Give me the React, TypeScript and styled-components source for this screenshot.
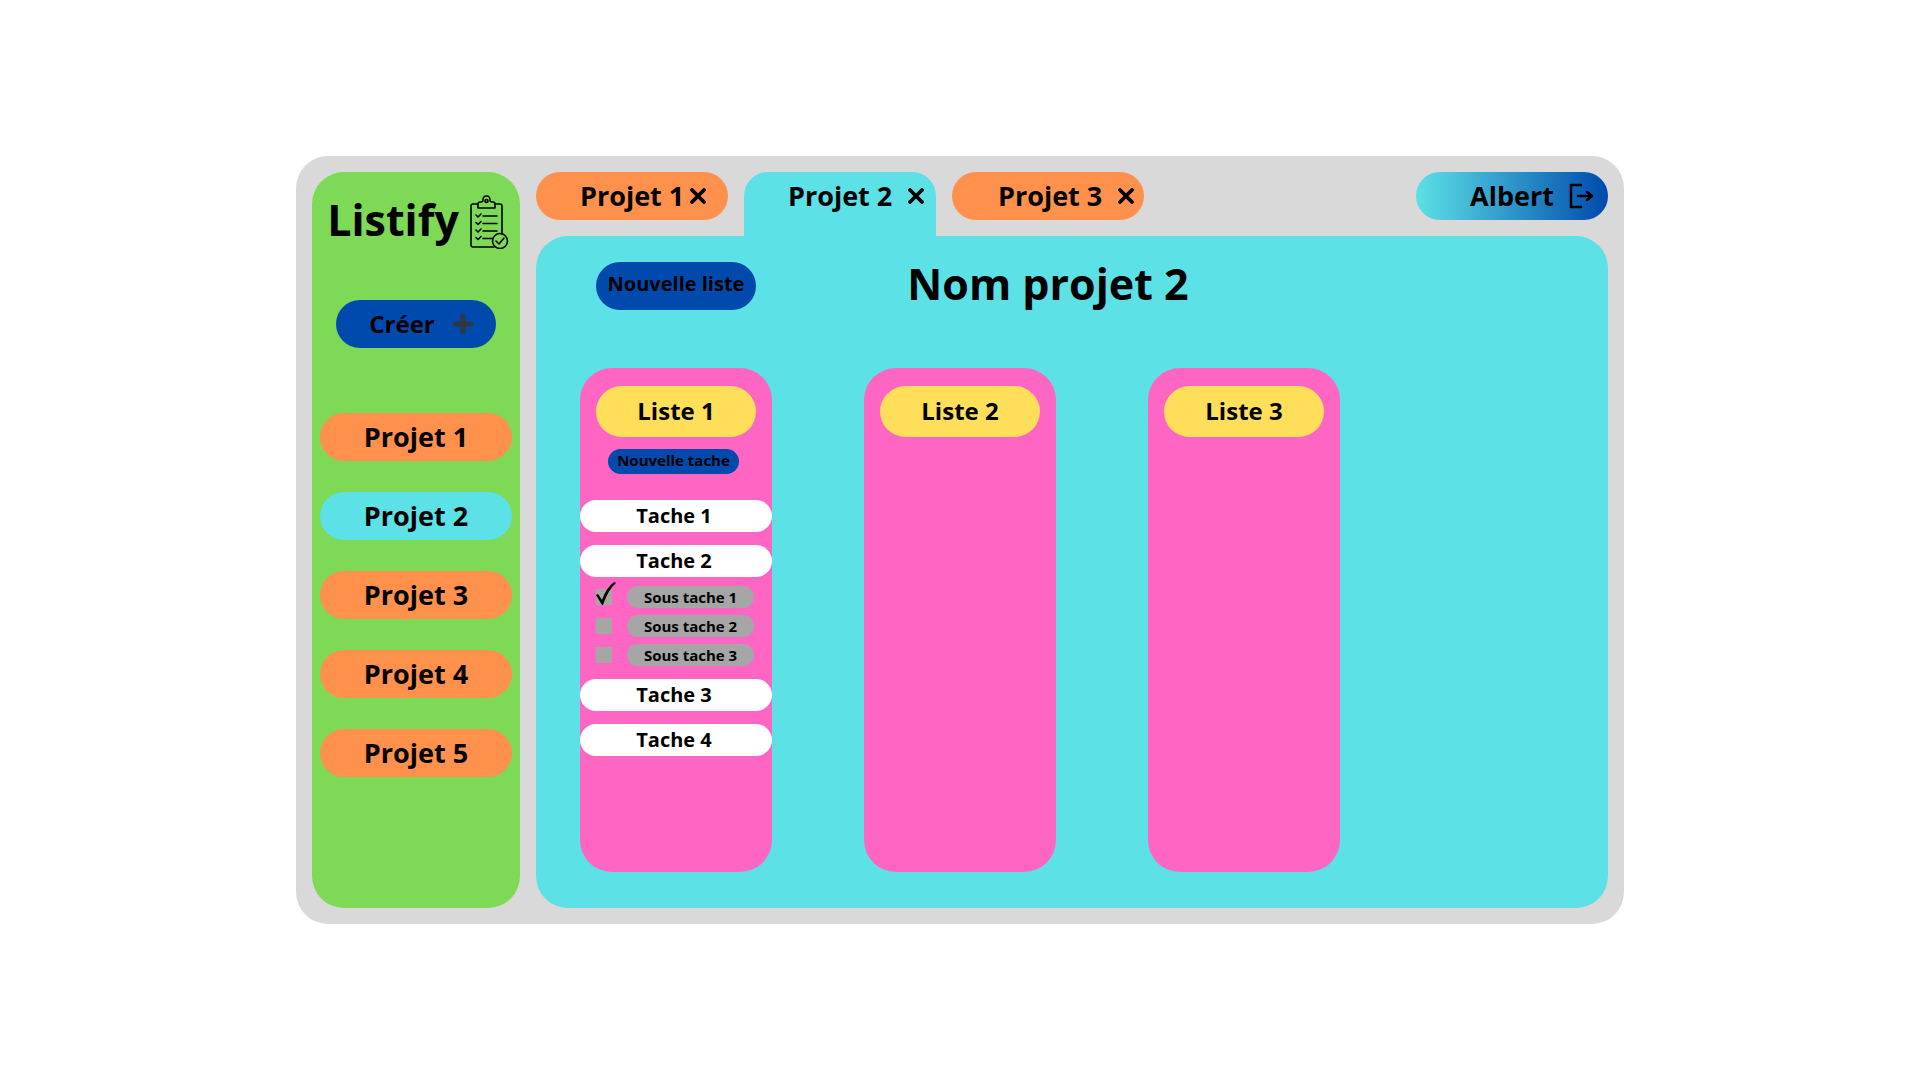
import React, { useState } from "react";
import styled, { createGlobalStyle } from "styled-components";

const color = {
  frame: "#d9d9d9",
  green: "#7ed957",
  orange: "#ff914d",
  cyan: "#5ce1e6",
  blue: "#004aad",
  pink: "#ff66c4",
  yellow: "#ffde59",
  grey: "#a6a6a6",
};

const GlobalStyle = createGlobalStyle`
  *, *::before, *::after { box-sizing: border-box; }
  body {
    margin: 0;
    background: #fff;
    color: #000;
    font-family: "Open Sans", "Noto Sans", sans-serif;
    font-weight: 700;
  }
  button { font: inherit; color: inherit; border: 0; padding: 0; background: none; cursor: pointer; }
  h1, h2, h3, ul { margin: 0; padding: 0; font-weight: inherit; list-style: none; }
  svg { display: block; }
`;

const Page = styled.div`
  display: flex;
  min-height: 100vh;
  padding: 156px 296px;
`;

const Frame = styled.div`
  flex: 1;
  display: flex;
  gap: 16px;
  padding: 16px;
  border-radius: 32px;
  background: ${color.frame};
`;

const Sidebar = styled.aside`
  flex: none;
  width: 208px;
  padding: 20px 8px 32px;
  border-radius: 32px;
  background: ${color.green};
  display: flex;
  flex-direction: column;
  align-items: center;
`;

const Brand = styled.div`
  display: flex;
  align-items: center;
  gap: 10px;
  height: 60px;
  padding-left: 4px;
  font-size: 43px;
  line-height: 56px;
`;

const BrandName = styled.span`
  padding-bottom: 4px;
`;

const PillButton = styled.button`
  display: flex;
  align-items: center;
  justify-content: center;
  width: 160px;
  height: 48px;
  border-radius: 24px;
  background: ${color.blue};
  line-height: 32px;
  white-space: nowrap;
`;

const CreateButton = styled(PillButton)`
  gap: 18px;
  padding-left: 10px;
  font-size: 24px;
`;

const NewListButton = styled(PillButton)`
  padding-bottom: 4px;
  font-size: 20px;
`;

const CreateArea = styled.div`
  padding: 48px 0 65px;
`;

const ProjectList = styled.ul`
  align-self: stretch;
  display: flex;
  flex-direction: column;
  gap: 31px;
`;

const ProjectButton = styled.button<{ $active: boolean }>`
  width: 100%;
  height: 48px;
  border-radius: 24px;
  background: ${(p) => (p.$active ? color.cyan : color.orange)};
  font-size: 27px;
  line-height: 36px;
`;

const Main = styled.main`
  flex: 1;
  min-width: 0;
  display: flex;
  flex-direction: column;
`;

const TopBar = styled.div`
  display: flex;
  gap: 16px;
  height: 64px;
`;

const Tab = styled.div<{ $active?: boolean; $inset: number; $gap: number }>`
  display: flex;
  align-items: center;
  gap: ${(p) => p.$gap}px;
  width: 192px;
  height: ${(p) => (p.$active ? 64 : 48)}px;
  padding: 0 0 ${(p) => (p.$active ? 16 : 0)}px ${(p) => p.$inset}px;
  border-radius: ${(p) => (p.$active ? "24px 24px 0 0" : "24px")};
  background: ${(p) => (p.$active ? color.cyan : color.orange)};
  font-size: 27px;
  line-height: 36px;
  white-space: nowrap;
`;

const Account = styled.button`
  display: flex;
  align-items: center;
  justify-content: flex-end;
  gap: 14px;
  width: 192px;
  height: 48px;
  margin-left: auto;
  padding-right: 14px;
  border-radius: 24px;
  background: linear-gradient(90deg, ${color.cyan}, ${color.blue});
  font-size: 27px;
  line-height: 36px;
`;

const Panel = styled.section`
  flex: 1;
  display: flex;
  flex-direction: column;
  gap: 58px;
  padding: 26px 44px 36px;
  border-radius: 32px;
  background: ${color.cyan};
`;

const PanelHead = styled.header`
  display: grid;
  grid-template-columns: 1fr auto 1fr;
  align-items: center;
  height: 48px;
  padding: 0 64px 0 16px;
`;

const ProjectTitle = styled.h1`
  padding-bottom: 4px;
  font-size: 43px;
  line-height: 44px;
`;

const Board = styled.div`
  flex: 1;
  display: flex;
  gap: 92px;
`;

const Column = styled.section`
  width: 192px;
  padding: 18px 0 24px;
  border-radius: 32px;
  background: ${color.pink};
`;

const ColumnTitle = styled.h2`
  height: 51px;
  margin: 0 16px;
  border-radius: 26px;
  background: ${color.yellow};
  font-size: 24px;
  line-height: 50px;
  text-align: center;
`;

const NewTask = styled.button`
  display: block;
  width: 131px;
  height: 25px;
  margin: 12px 0 26px 28px;
  padding-bottom: 3px;
  border-radius: 13px;
  background: ${color.blue};
  font-size: 15px;
  line-height: 22px;
  white-space: nowrap;
`;

const TaskList = styled.ul`
  display: flex;
  flex-direction: column;
  gap: 13px;
`;

const TaskTitle = styled.h3`
  height: 32px;
  padding-right: 4px;
  border-radius: 16px;
  background: #fff;
  font-size: 20px;
  line-height: 32px;
  text-align: center;
`;

const SubList = styled.ul`
  display: flex;
  flex-direction: column;
  gap: 7px;
  padding-top: 9px;
`;

const SubRow = styled.li`
  display: flex;
  align-items: center;
  gap: 15px;
  padding-left: 16px;
`;

const CheckWrap = styled.span`
  position: relative;
  flex: none;
  width: 16px;
  height: 16px;
`;

const Check = styled.input`
  appearance: none;
  display: block;
  width: 16px;
  height: 16px;
  margin: 0;
  background: ${color.grey};
`;

const Mark = styled.svg`
  position: absolute;
  left: 0;
  bottom: 0;
  pointer-events: none;
`;

const SubLabel = styled.label`
  width: 127px;
  height: 22px;
  border-radius: 11px;
  background: ${color.grey};
  font-size: 15px;
  line-height: 22px;
  text-align: center;
`;

const ClipboardIcon = () => (
  <svg width="40" height="54" viewBox="0 0 40 54" fill="none" stroke="#000" strokeWidth="1.6" strokeLinecap="round" strokeLinejoin="round" aria-hidden="true">
    <path d="M9 9H4Q2 9 2 11V50Q2 52 4 52H25M26 9H31Q33 9 33 11V39" />
    <path d="M9 13V9Q9 7 11 7H12Q14 7 14 5Q14 1 17.500 1T21 5Q21 7 23 7H24Q26 7 26 9V13Z" />
    <circle cx="17.500" cy="6" r="1.500" />
    <path d="M7 20l2 2 3-3M14 21H28M7 27.500l2 2 3-3M14 28.500H28M7 35l2 2 3-3M14 36H28M7 42.500l2 2 3-3M14 43.500H23" />
    <circle cx="31" cy="46" r="7.500" />
    <path d="M27 46l3 3 5-6" />
  </svg>
);

const PlusIcon = () => (
  <svg width="20" height="20" viewBox="0 0 20 20" stroke="#31373d" strokeWidth="5" strokeLinecap="round" aria-hidden="true">
    <path d="M10 2.500V17.500M2.500 10H17.500" />
  </svg>
);

const CloseIcon = () => (
  <svg width="16" height="16" viewBox="0 0 16 16" stroke="#000" strokeWidth="3.800" strokeLinecap="round" aria-hidden="true">
    <path d="M2 2L14 14M14 2L2 14" />
  </svg>
);

const LogoutIcon = () => (
  <svg width="26" height="26" viewBox="0 0 26 26" fill="none" stroke="#000" strokeWidth="2.500" strokeLinecap="round" strokeLinejoin="round" aria-hidden="true">
    <path d="M13 2H3V24H13M10 13H24M19 9L24 13L19 17" />
  </svg>
);

const projects = ["Projet 1", "Projet 2", "Projet 3", "Projet 4", "Projet 5"];

const tabs = [
  { name: "Projet 1", inset: 44, gap: 6 },
  { name: "Projet 2", inset: 44, gap: 16, active: true },
  { name: "Projet 3", inset: 46, gap: 16 },
];

const tasks = [
  { name: "Tache 1", subs: [] },
  { name: "Tache 2", subs: ["Sous tache 1", "Sous tache 2", "Sous tache 3"] },
  { name: "Tache 3", subs: [] },
  { name: "Tache 4", subs: [] },
];

function SubTask({ name, initial }: { name: string; initial: boolean }) {
  const [done, setDone] = useState(initial);
  const id = name.toLowerCase().replace(/ /g, "-");
  return (
    <SubRow>
      <CheckWrap>
        <Check id={id} type="checkbox" checked={done} onChange={() => setDone(!done)} />
        {done && (
          <Mark width="20" height="23" viewBox="0 0 20 23" aria-hidden="true">
            <path d="M0 13L2 12L6 18Q10 6 18 0L20 1Q12 8 7 23H6Z" />
          </Mark>
        )}
      </CheckWrap>
      <SubLabel htmlFor={id}>{name}</SubLabel>
    </SubRow>
  );
}

export default function App() {
  return (
    <>
      <GlobalStyle />
      <Page>
        <Frame>
          <Sidebar>
            <Brand>
              <BrandName>Listify</BrandName>
              <ClipboardIcon />
            </Brand>
            <CreateArea>
              <CreateButton>
                Créer
                <PlusIcon />
              </CreateButton>
            </CreateArea>
            <ProjectList>
              {projects.map((name) => (
                <li key={name}>
                  <ProjectButton $active={name === "Projet 2"}>{name}</ProjectButton>
                </li>
              ))}
            </ProjectList>
          </Sidebar>
          <Main>
            <TopBar>
              {tabs.map((t) => (
                <Tab key={t.name} $active={t.active} $inset={t.inset} $gap={t.gap}>
                  {t.name}
                  <button aria-label={`Fermer ${t.name}`}>
                    <CloseIcon />
                  </button>
                </Tab>
              ))}
              <Account>
                Albert
                <LogoutIcon />
              </Account>
            </TopBar>
            <Panel>
              <PanelHead>
                <NewListButton>Nouvelle liste</NewListButton>
                <ProjectTitle>Nom projet 2</ProjectTitle>
              </PanelHead>
              <Board>
                <Column>
                  <ColumnTitle>Liste 1</ColumnTitle>
                  <NewTask>Nouvelle tache</NewTask>
                  <TaskList>
                    {tasks.map((task) => (
                      <li key={task.name}>
                        <TaskTitle>{task.name}</TaskTitle>
                        {task.subs.length > 0 && (
                          <SubList>
                            {task.subs.map((s, i) => (
                              <SubTask key={s} name={s} initial={i === 0} />
                            ))}
                          </SubList>
                        )}
                      </li>
                    ))}
                  </TaskList>
                </Column>
                <Column>
                  <ColumnTitle>Liste 2</ColumnTitle>
                </Column>
                <Column>
                  <ColumnTitle>Liste 3</ColumnTitle>
                </Column>
              </Board>
            </Panel>
          </Main>
        </Frame>
      </Page>
    </>
  );
}
